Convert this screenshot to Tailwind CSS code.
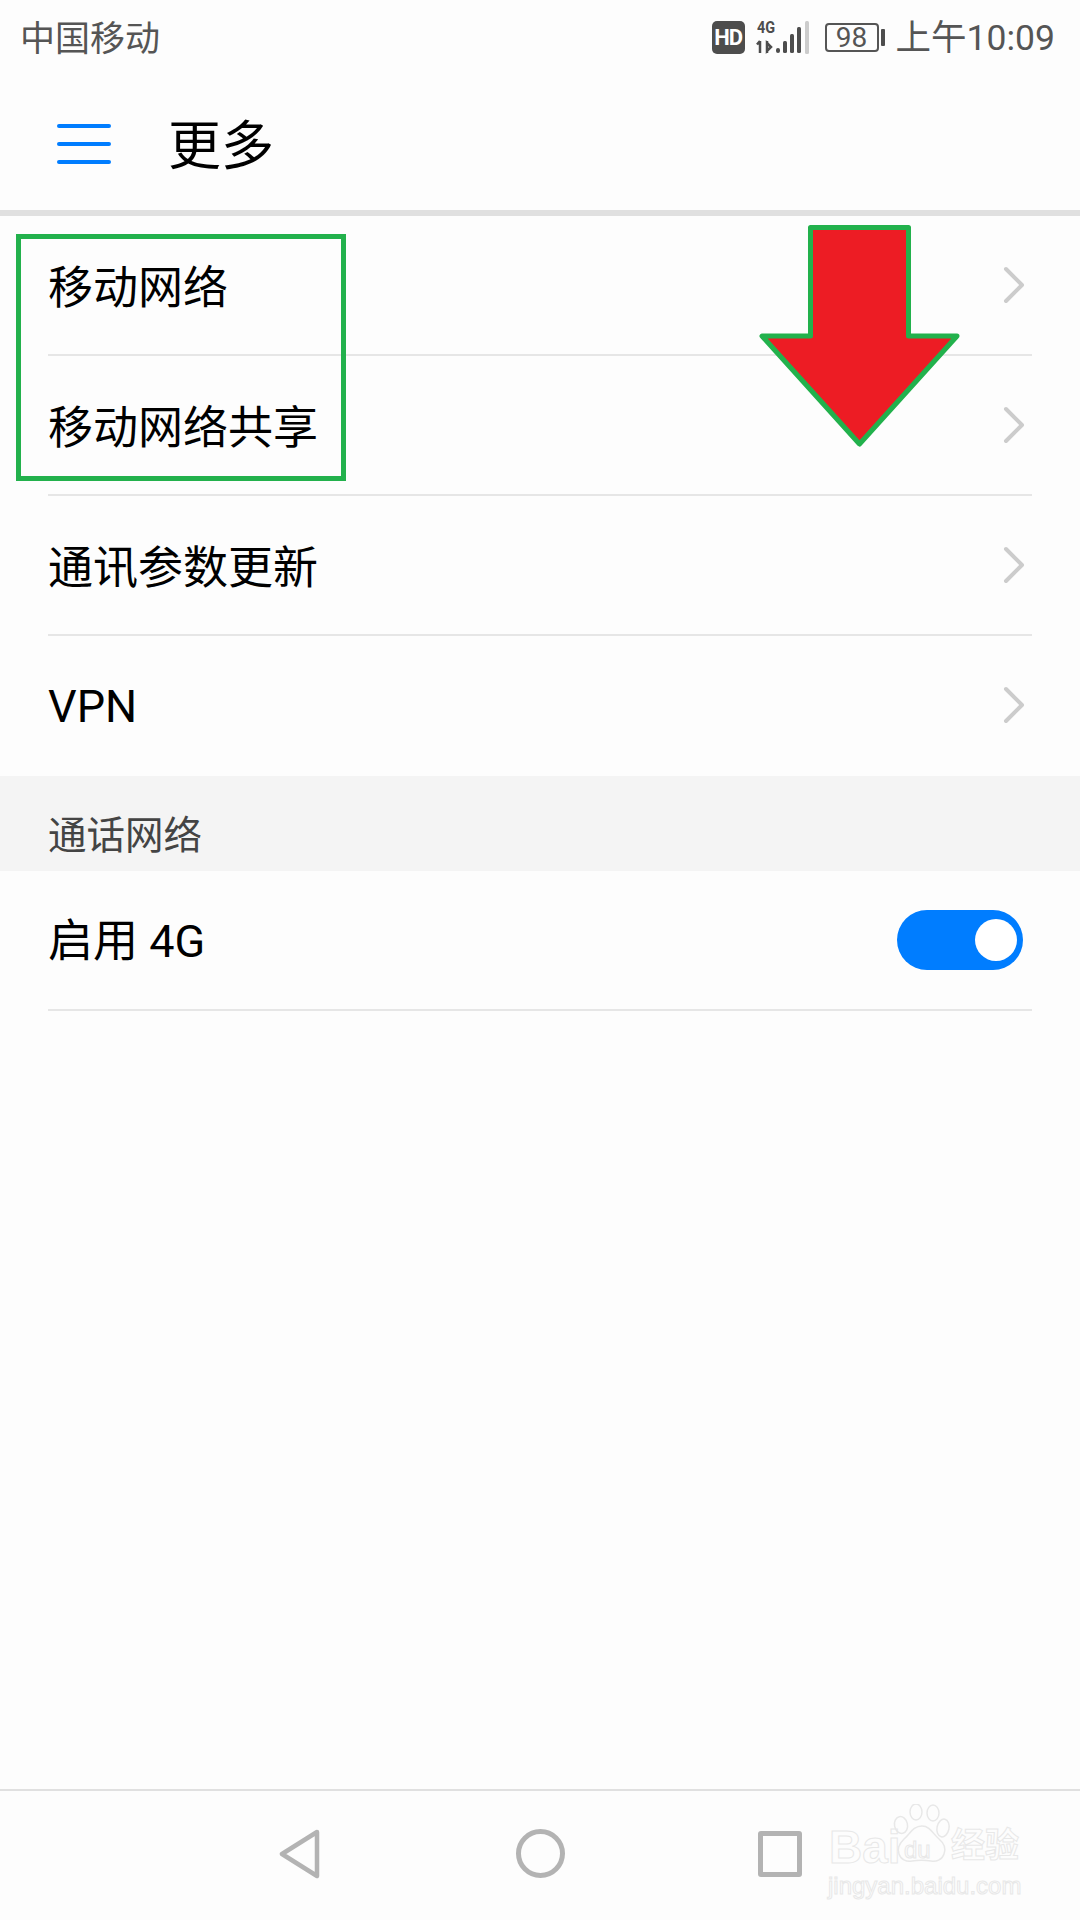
<!DOCTYPE html>
<html>

<head>
  <meta charset="UTF-8">
  <meta name="viewport" content="width=device-width, initial-scale=1.0">
  <script src="https://cdn.jsdelivr.net/npm/@tailwindcss/browser@4"></script>
</head>

<body>
  <div class="relative flex flex-col w-[1080px] h-[1920px] overflow-hidden bg-[#fdfdfd] text-black font-['Roboto','Noto_Sans_CJK_SC',sans-serif]">
    <!-- status bar -->
    <div class="flex items-center h-[75px] pl-[20px] pr-[25px] text-[#555555]">
      <span class="text-[35px] leading-none mt-[4px]">中国移动</span>
      <div class="flex items-center ml-auto">
        <div class="flex items-center justify-center w-[33px] h-[33px] rounded-[5px] bg-[#4d4d4d] text-white text-[22px] font-bold leading-none tracking-[-1px]">HD</div>
        <div class="relative ml-[11px] w-[54px] h-[36px]">
          <span class="absolute left-[1px] top-[-1px] text-[17px] font-bold leading-none text-[#4d4d4d] origin-left scale-x-[0.85]">4G</span>
          <svg class="absolute left-0 top-0" width="54" height="36" viewBox="0 0 54 36">
            <path d="M4 21v12M1 24.500 4 21M11 21v12M11 23l4 4-4 4z" stroke="#4d4d4d" stroke-width="2.500" fill="none" />
            <rect x="20" y="28" width="4" height="5" rx="2" fill="#4d4d4d" />
            <rect x="27" y="21" width="4" height="12" rx="1.500" fill="#4d4d4d" />
            <rect x="34" y="14" width="4" height="19" rx="1.500" fill="#4d4d4d" />
            <rect x="41" y="7" width="4" height="26" rx="1.500" fill="#4d4d4d" />
            <rect x="49" y="1" width="4" height="33" rx="1.500" fill="#cccccc" />
          </svg>
        </div>
        <div class="ml-[15px] flex items-center justify-center w-[54px] h-[29px] rounded-[4px] border-2 border-[#555555] text-[28px] leading-none">98</div>
        <div class="ml-[2px] w-[4px] h-[17px] rounded-[1px] bg-[#4d4d4d]"></div>
        <span class="ml-[11px] text-[35.500px] leading-none mt-[2px]">上午10:09</span>
      </div>
    </div>

    <!-- title bar -->
    <div class="flex items-center h-[135px] pl-[57px]">
      <div class="flex flex-col gap-[13.500px] w-[54px] mt-[3px]">
        <div class="h-[4.500px] rounded-full bg-[#007dff]"></div>
        <div class="h-[4.500px] rounded-full bg-[#007dff]"></div>
        <div class="h-[4.500px] rounded-full bg-[#007dff]"></div>
      </div>
      <span class="ml-[57px] text-[53px] leading-none mt-[9px]">更多</span>
    </div>
    <div class="h-[6px] bg-[#e0e0e0]"></div>

    <!-- list -->
    <div class="mx-[48px] flex items-center justify-between h-[140px] border-b-2 border-[#e6e6e6] text-[45px]">
      <span class="mt-[7px]">移动网络</span>
      <svg class="mr-[6px]" width="24" height="40" viewBox="0 0 24 40"><path d="M4 4 20 20 4 36" fill="none" stroke="#cccccc" stroke-width="4" stroke-linecap="round" stroke-linejoin="round" /></svg>
    </div>
    <div class="mx-[48px] flex items-center justify-between h-[140px] border-b-2 border-[#e6e6e6] text-[45px]">
      <span class="mt-[7px]">移动网络共享</span>
      <svg class="mr-[6px]" width="24" height="40" viewBox="0 0 24 40"><path d="M4 4 20 20 4 36" fill="none" stroke="#cccccc" stroke-width="4" stroke-linecap="round" stroke-linejoin="round" /></svg>
    </div>
    <div class="mx-[48px] flex items-center justify-between h-[140px] border-b-2 border-[#e6e6e6] text-[45px]">
      <span class="mt-[7px]">通讯参数更新</span>
      <svg class="mr-[6px]" width="24" height="40" viewBox="0 0 24 40"><path d="M4 4 20 20 4 36" fill="none" stroke="#cccccc" stroke-width="4" stroke-linecap="round" stroke-linejoin="round" /></svg>
    </div>
    <div class="mx-[48px] flex items-center justify-between h-[140px] text-[45px]">
      <span class="mt-[2px]">VPN</span>
      <svg class="mr-[6px] mb-[2px]" width="24" height="40" viewBox="0 0 24 40"><path d="M4 4 20 20 4 36" fill="none" stroke="#cccccc" stroke-width="4" stroke-linecap="round" stroke-linejoin="round" /></svg>
    </div>

    <div class="flex items-end h-[95px] pl-[48px] pb-[16px] bg-[#f4f4f4] text-[38.500px] leading-none text-[#444444]">通话网络</div>

    <div class="mx-[48px] flex items-center justify-between h-[140px] border-b-2 border-[#e6e6e6] text-[45px]">
      <span class="mt-[4px]">启用 4G</span>
      <div class="flex items-center justify-end w-[126px] h-[60px] mr-[9px] pr-[6px] rounded-full bg-[#007dff]">
        <div class="w-[42px] h-[42px] rounded-full bg-white"></div>
      </div>
    </div>

    <!-- nav bar -->
    <div class="flex items-center mt-auto h-[131px] pl-[279px] pb-[4px] border-t-2 border-[#e0e0e0]">
      <svg width="41" height="50" viewBox="0 0 41 50"><path d="M38 3 3 25 38 47z" fill="none" stroke="#b3b3b3" stroke-width="4.500" stroke-linejoin="round" /></svg>
      <div class="ml-[196px] w-[49px] h-[49px] rounded-full border-[5px] border-[#b3b3b3]"></div>
      <div class="ml-[193px] w-[44px] h-[46px] rounded-[3px] border-[5px] border-[#b3b3b3]"></div>
    </div>

    <!-- annotations drawn on top of the screenshot -->
    <div class="absolute left-[16px] top-[234px] w-[330px] h-[247px] border-[5px] border-[#22b14c]"></div>
    <svg class="absolute left-[755px] top-[220px]" width="210" height="232" viewBox="755 220 210 232">
      <path d="M810.500 227.500H908.500V336H957L859.500 444 762 336H810.500z" fill="#ed1c24" stroke="#22b14c" stroke-width="5" stroke-linejoin="round" />
    </svg>

    <!-- watermark -->
    <div class="absolute left-[826px] top-[1804px] w-[200px] h-[100px] text-transparent [-webkit-text-stroke:1px_#e8e8e8]">
      <span class="absolute left-[3px] top-[20px] text-[46px] font-bold leading-none font-['Liberation_Sans',sans-serif]">Bai</span>
      <svg class="absolute left-[66px] top-0" width="62" height="66" viewBox="0 0 62 66" fill="none" stroke="#e8e8e8" stroke-width="1.500">
        <ellipse cx="9" cy="21" rx="6.500" ry="8.500" transform="rotate(-12 9 21)" />
        <ellipse cx="24" cy="8" rx="6" ry="8" />
        <ellipse cx="41" cy="9" rx="6" ry="8" />
        <ellipse cx="51" cy="24" rx="6" ry="9" transform="rotate(12 51 24)" />
        <path d="M30 22c8 0 11 8 17 13 6 5 7 10 5 15-2 6-8 8-13 7-6-1-13-1-19 0-5 1-11-1-13-7-2-5 0-10 5-15 6-5 9-13 18-13z" />
      </svg>
      <span class="absolute left-[78px] top-[34px] text-[24px] leading-none font-['Liberation_Sans',sans-serif]">du</span>
      <span class="absolute left-[125px] top-[24px] text-[34px] font-bold leading-none">经验</span>
      <span class="absolute left-[2px] top-[70px] text-[24px] leading-none font-['Liberation_Sans',sans-serif]">jingyan.baidu.com</span>
    </div>
  </div>
</body>

</html>
